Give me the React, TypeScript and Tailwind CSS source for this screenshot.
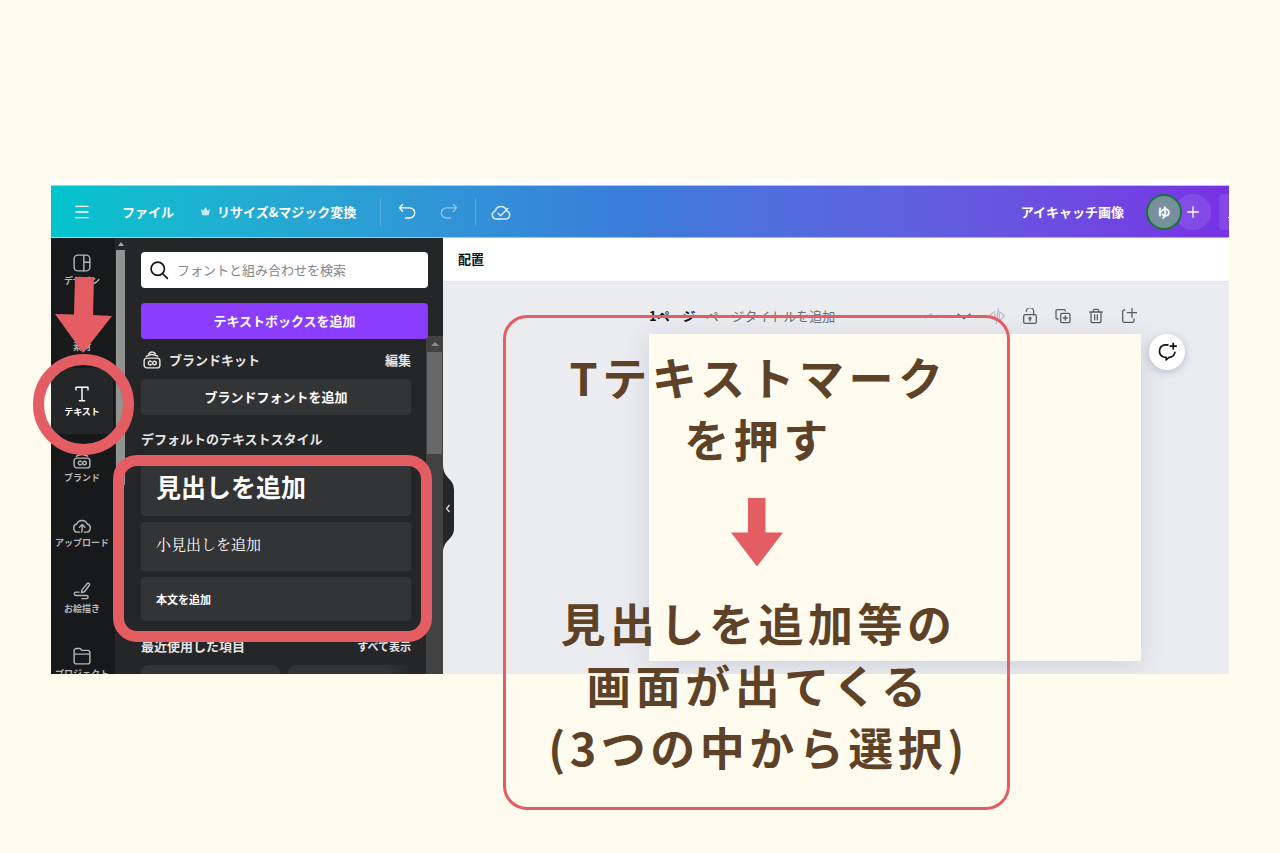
import type { ReactNode } from "react";
import clsx from "clsx";

type IconProps = {
  className?: string;
  children: ReactNode;
};

function Icon({ className, children }: IconProps) {
  return (
    <svg
      viewBox="0 0 24 24"
      fill="none"
      stroke="currentColor"
      strokeWidth="1.9"
      strokeLinecap="round"
      strokeLinejoin="round"
      aria-hidden="true"
      className={clsx("shrink-0", className)}
    >
      {children}
    </svg>
  );
}

const brandPaths = (
  <>
    <rect x="1.5" y="9.5" width="21" height="13" rx="3.5" />
    <path d="M4.500 7C8.500 4.300 14.500 4 19.500 6.800M7.500 3.800C10 .8 13.500 .6 16.500 3.500" />
    <path d="M11 14.200a2.400 2.400 0 1 0 0 3.600" />
    <circle cx="15.300" cy="16" r="2.400" />
  </>
);

const railItems: { label: string; icon: ReactNode; active?: boolean }[] = [
  {
    label: "デザイン",
    icon: (
      <>
        <rect x="1.500" y="1.500" width="21" height="21" rx="5" />
        <path d="M14.500 1.500v21M14.500 11h8" />
      </>
    ),
  },
  {
    label: "素材",
    icon: (
      <>
        <circle cx="7" cy="16.500" r="4" />
        <rect x="14" y="13" width="7" height="7" rx="1" />
        <path d="M12 3l4 7H8z" />
      </>
    ),
  },
  {
    label: "テキスト",
    active: true,
    icon: <path d="M4 6.500V3h16v3.500M12 3v18M8.500 21h7" />,
  },
  { label: "ブランド", icon: brandPaths },
  {
    label: "アップロード",
    icon: (
      <>
        <path d="M9 21.500H6.500a5.500 5.500 0 0 1-1.500-10.800 7.500 7.500 0 0 1 14 0 5.500 5.500 0 0 1-1.500 10.800H15" />
        <path d="M11.500 21.500c1-2 .800-4 .800-9.500M8.500 15l3.800-3.800L16 15" />
      </>
    ),
  },
  {
    label: "お絵描き",
    icon: (
      <>
        <path d="M12 10.500l7-8.500c1.500-1.500 4 .500 2.800 2.300l-6.500 8.700-4 1z" />
        <path d="M8 13.500H4a2.200 2.200 0 0 0 0 4.500h14a2 2 0 0 1 0 4.200h-6" />
      </>
    ),
  },
  {
    label: "プロジェクト",
    icon: (
      <path d="M1.500 9.500V5a3 3 0 0 1 3-3h4.700c1.300 0 2 2.500 3.300 2.500h7a3 3 0 0 1 3 3v12a3 3 0 0 1-3 3h-15a3 3 0 0 1-3-3v-10h21" />
    ),
  },
];

const pageActions: { label: string; icon: ReactNode; muted?: boolean }[] = [
  { label: "上に移動", muted: true, icon: <path d="M4 15l8-6 8 6" /> },
  { label: "下に移動", icon: <path d="M3 9l9 7 9-7" /> },
  {
    label: "ページを非表示",
    muted: true,
    icon: (
      <>
        <path d="M9 5.500C5 7 2.500 10 1 12c1.500 2.500 4 5.300 8 6.500M15 5.500c4 1.500 6.500 4.500 8 6.500-1.500 2.500-4 5.300-8 6.500" />
        <path d="M14 1l-3 22M9 9v6M15.500 9v6" />
      </>
    ),
  },
  {
    label: "ロック",
    icon: (
      <>
        <rect x="2.500" y="10" width="19" height="13" rx="2.500" />
        <path d="M6.500 5a5.500 5.500 0 0 1 11 0v5M12 17v2.500" />
        <circle cx="12" cy="15.500" r="1.500" />
      </>
    ),
  },
  {
    label: "複製",
    icon: (
      <>
        <path d="M4.500 16.500h-1a2 2 0 0 1-2-2v-10a2 2 0 0 1 2-2h10a2 2 0 0 1 2 2" />
        <rect x="8.500" y="8" width="14" height="14" rx="2" />
        <path d="M15.500 12v6M12.500 15h6" />
      </>
    ),
  },
  {
    label: "削除",
    icon: (
      <>
        <path d="M2.500 6h19M8 6V4a2 2 0 0 1 2-2h4a2 2 0 0 1 2 2v2M4.500 6v13a3 3 0 0 0 3 3h9a3 3 0 0 0 3-3V6" />
        <path d="M10 10.500v7M14 10.500v7" />
      </>
    ),
  },
  {
    label: "ページを追加",
    icon: (
      <path d="M5.500 3H5a2.500 2.500 0 0 0-2.500 2.500V19A2.500 2.500 0 0 0 5 21.500h12a2.500 2.500 0 0 0 2.500-2.500v-2.500M16.500 0v14M9.500 7h14" />
    ),
  },
];

function TopBar() {
  return (
    <header className="flex h-[53px] items-center border-t border-b border-t-[#b9c6cf] border-b-white/50 bg-linear-to-r from-[#00c4cc] via-[#3a7bda] to-[#7731e4] text-[13px] font-bold text-white">
      <button type="button" aria-label="メニュー" className="ml-[22px]">
        <Icon className="size-[18px]">
          <path d="M4 4.500h16M4 12h16M4 19.500h16" />
        </Icon>
      </button>
      <button type="button" className="ml-[31px]">
        ファイル
      </button>
      <button type="button" className="ml-[26px] flex items-center gap-[6px]">
        <svg viewBox="0 0 12 12" className="size-[11px] fill-white/75" aria-hidden="true">
          <path d="M1 3l2.500 2.500L6 1l2.500 4.500L11 3l-1.500 7h-7z" />
        </svg>
        リサイズ&amp;マジック変換
      </button>
      <span className="ml-6 h-7 w-px bg-white/20" />
      <button type="button" aria-label="元に戻す" className="ml-[17px]">
        <Icon className="size-[18px]">
          <path d="M6 2L2 6.500 6 11M2 6.500h13.500a6 6 0 0 1 0 13.500H10" />
        </Icon>
      </button>
      <button type="button" aria-label="やり直す" className="ml-6 opacity-45">
        <Icon className="size-[18px]">
          <path d="M18 2l4 4.500-4 4.500M22 6.500H8.500a6 6 0 0 0 0 13.500H14" />
        </Icon>
      </button>
      <span className="ml-[17px] h-7 w-px bg-white/20" />
      <button type="button" aria-label="保存済み" className="ml-[15px] opacity-80">
        <Icon className="size-5">
          <path d="M6.500 20.500a5 5 0 0 1-1.300-9.800 7 7 0 0 1 13.600 0 5 5 0 0 1-1.300 9.800z" />
          <path d="M8.500 13.500l3 3L20 8" />
        </Icon>
      </button>

      <span className="ml-auto">アイキャッチ画像</span>
      <div className="ml-[22px] flex items-center">
        <span className="z-10 flex size-9 items-center justify-center rounded-full border-2 border-[#17743a] bg-[#78909c]">
          ゆ
        </span>
        <button
          type="button"
          aria-label="メンバーを追加"
          className="-ml-[7px] flex size-9 items-center justify-center rounded-full bg-white/10"
        >
          <Icon className="size-4">
            <path d="M12 4v16M4 12h16" />
          </Icon>
        </button>
      </div>
      <span className="ml-2 flex h-9 w-[10px] items-end justify-end rounded-l bg-white/10 pb-3">
        <span className="h-px w-px bg-white" />
      </span>
    </header>
  );
}

function SideRail() {
  return (
    <div className="flex w-[75px] shrink-0 bg-[#18191b]">
      <nav className="-mt-px flex h-[459px] w-16 flex-col pr-[2px]">
        {railItems.map(({ label, icon, active }) => (
          <a
            key={label}
            href="#"
            className={clsx(
              "flex flex-1 flex-col items-center pt-4 text-[9px] leading-4 font-bold whitespace-nowrap",
              active ? "bg-[#252627] text-white" : "text-[#b4b5b6]",
            )}
          >
            <Icon className="size-5 p-px">{icon}</Icon>
            {label}
          </a>
        ))}
      </nav>
      <div className="flex flex-1 flex-col items-center bg-[#252627] pt-1">
        <svg viewBox="0 0 6 4" className="mb-1 h-1 w-[6px] fill-[#a5a6a7]" aria-hidden="true">
          <path d="M3 0l3 4H0z" />
        </svg>
        <div className="h-[235px] w-[9px] bg-[#929393]" />
      </div>
    </div>
  );
}

function TextPanel() {
  return (
    <aside className="relative flex w-[317px] shrink-0 flex-col bg-[#252627] pt-[14px] text-[13px] font-bold text-white">
      <label className="mr-[15px] ml-[15px] flex h-9 items-center gap-2 rounded bg-white px-2">
        <Icon className="size-5 text-[#0e1318]">
          <circle cx="10.500" cy="10.500" r="8" strokeWidth="2" />
          <path d="M16.500 16.500l5.500 5.500" strokeWidth="2" />
        </Icon>
        <input
          type="text"
          aria-label="フォントと組み合わせを検索"
          placeholder="フォントと組み合わせを検索"
          className="min-w-0 flex-1 font-normal outline-none placeholder:text-[#84868a]"
        />
      </label>
      <button
        type="button"
        className="z-10 mx-[15px] mt-[15px] h-9 shrink-0 rounded bg-[#8b3dff]"
      >
        テキストボックスを追加
      </button>

      <div className="-mt-[3px] flex min-h-0 flex-1">
        <div className="flex min-w-0 flex-1 flex-col overflow-hidden px-[15px] pt-3">
          <div className="flex h-6 shrink-0 items-center text-[#e4e4e5]">
            <Icon className="mr-2 ml-[2px] size-[18px]">{brandPaths}</Icon>
            <span>ブランドキット</span>
            <button type="button" className="ml-auto">
              編集
            </button>
          </div>
          <button type="button" className="mt-[7px] h-9 shrink-0 rounded bg-[#333436]">
            ブランドフォントを追加
          </button>
          <h2 className="mt-[14px] leading-5 text-[#e4e4e5]">デフォルトのテキストスタイル</h2>
          <div className="mt-[11px] flex shrink-0 flex-col gap-[6px]">
            <button
              type="button"
              className="h-14 rounded bg-[#333436] px-[15px] pb-[2px] text-left text-[25px]"
            >
              見出しを追加
            </button>
            <button
              type="button"
              className="h-[49px] rounded bg-[#333436] px-[15px] pb-[2px] text-left font-['Liberation_Serif','Noto_Serif_CJK_JP','Noto_Sans_CJK_JP',serif] text-[15px] font-normal"
            >
              小見出しを追加
            </button>
            <button type="button" className="h-11 rounded bg-[#333436] px-[15px] text-left text-[11px]">
              本文を追加
            </button>
          </div>
          <div className="mt-[15px] flex h-5 shrink-0 items-center justify-between text-[#e4e4e5]">
            <h2>最近使用した項目</h2>
            <button type="button" className="text-[11px]">
              すべて表示
            </button>
          </div>
          <div className="mt-[9px] flex shrink-0 gap-2">
            <div className="h-24 w-[139px] shrink-0 rounded-lg bg-[#333436]" />
            <div className="h-24 flex-1 rounded-l-lg bg-linear-to-r from-[#333436] from-80% to-[#252627]" />
          </div>
        </div>
        {/* スクロールバー */}
        <div className="flex w-[17px] flex-col items-center bg-[#424242]">
          <svg viewBox="0 0 8 4" className="my-[6px] h-1 w-2 fill-[#8a8a8a]" aria-hidden="true">
            <path d="M4 0l4 4H0z" />
          </svg>
          <div className="h-[102px] w-[15px] bg-[#686868]" />
        </div>
      </div>

      {/* パネルを閉じるタブ */}
      <button type="button" aria-label="パネルを閉じる" className="absolute top-[226px] left-full z-10">
        <svg viewBox="0 0 12 90" className="h-[90px] w-3" aria-hidden="true">
          <path d="M0 0c0 16 11 13 11 26v38c0 13-11 10-11 26z" fill="#252627" />
          <path d="M6.500 41L3.500 44.500l3 3.500" fill="none" stroke="#e4e4e5" strokeWidth="1.200" />
        </svg>
      </button>
    </aside>
  );
}

function Editor() {
  return (
    <section className="flex min-w-0 flex-1 flex-col bg-[#ebecf0] text-[13px]">
      <div className="flex h-11 shrink-0 items-center border-b border-[#e3e4e8] bg-white px-[15px] pb-[2px] font-bold text-[#0e1318]">
        <button type="button">配置</button>
      </div>
      <div className="pt-6 pr-[88px] pl-[206px]">
        <div className="flex h-5 items-center justify-between pr-1">
          <p className="whitespace-nowrap text-[#6b6f76]">
            <span className="font-bold text-[#0e1318]">1ページ</span> - ページタイトルを追加
          </p>
          <div className="flex gap-[17px]">
            {pageActions.map(({ label, icon, muted }) => (
              <button
                key={label}
                type="button"
                aria-label={label}
                className={muted ? "text-[#b9bcc2]" : "text-[#585c63]"}
              >
                <Icon className="size-4">{icon}</Icon>
              </button>
            ))}
          </div>
        </div>
        <div className="relative mt-2 h-[327px] bg-[#fffbef] shadow-[0_4px_24px_rgba(57,76,130,0.16)]">
          <button
            type="button"
            aria-label="コメントを追加"
            className="absolute top-0 left-full ml-2 flex size-9 items-center justify-center rounded-full bg-white text-[#0e1318] shadow-[0_2px_8px_rgba(57,76,130,0.3)]"
          >
            <Icon className="size-5">
              <path
                d="M13 3.500H9.500a7.500 7.500 0 0 0-1.500 14.500l3 .500v3l3.500-3a7.500 7.500 0 0 0 7-6"
                strokeWidth="2"
              />
              <path d="M19.500 1.500v7M16 5h7" strokeWidth="2" />
            </Icon>
          </button>
        </div>
      </div>
    </section>
  );
}

function Callout() {
  return (
    <div className="absolute top-[136px] left-[452px] z-20 flex w-[507px] flex-col items-center rounded-3xl border-3 border-[#e35d63] pt-7 pb-[29px] text-center text-[45px] leading-[62px] font-bold tracking-widest whitespace-nowrap text-[#5e4227]">
      <p className="pl-1">
        Tテキストマーク
        <br />
        を押す
      </p>
      <svg viewBox="0 0 52 68" className="mt-7 mb-[26px] h-[68px] w-[52px] fill-[#e35d63]" aria-hidden="true">
        <path d="M17 0h17.500v34.500H52L26 68.500 0 34.500h17z" />
      </svg>
      <p className="pl-1">
        見出しを追加等の
        <br />
        画面が出てくる
        <br />
        (3つの中から選択)
      </p>
    </div>
  );
}

export default function App() {
  return (
    <main className="min-h-screen bg-[#fffbef] px-[51px] pt-[179px] font-['Noto_Sans_CJK_JP',sans-serif]">
      <div className="relative">
        <div className="border-t-6 border-white">
          <TopBar />
          <div className="flex h-[436px] overflow-hidden">
            <SideRail />
            <TextPanel />
            <Editor />
          </div>
        </div>

        {/* 説明用の赤い印 */}
        <svg
          viewBox="0 0 58 77"
          className="absolute top-[98px] left-1 z-20 h-[77px] w-[58px] fill-[#e35d63]"
          aria-hidden="true"
        >
          <path d="M20 0h19l-1 38 19 1-29 37L0 37l19 .500z" />
        </svg>
        <div className="absolute top-[175px] -left-[18px] z-20 size-[101px] rounded-full border-11 border-[#e35d63]" />
        <div className="absolute top-[276px] left-[62px] z-20 h-[187px] w-[319px] rounded-3xl border-11 border-[#e35d63]" />
        <Callout />
      </div>
    </main>
  );
}
